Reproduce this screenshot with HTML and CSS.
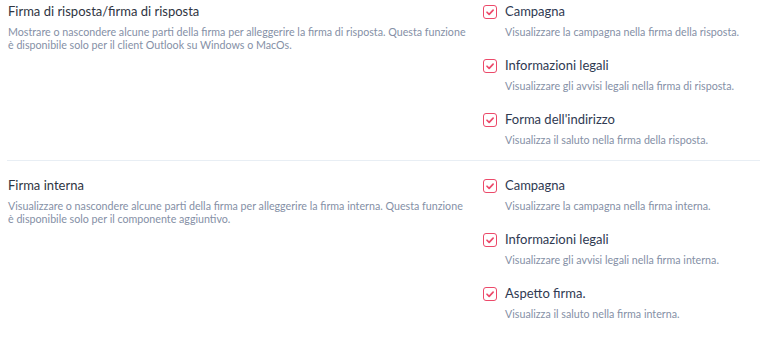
FILE: index.html
```html
<!DOCTYPE html>
<html lang="it">
<head>
    <meta charset="UTF-8">
    <title>Firma</title>
    <link rel="stylesheet" href="styles.css">
</head>
<body>
    <div class="settings">
        <div class="section">
            <div class="info">
                <h3>Firma di risposta/firma di risposta</h3>
                <p>Mostrare o nascondere alcune parti della firma per alleggerire la firma di risposta. Questa funzione è disponibile solo per il client Outlook su Windows o MacOs.</p>
            </div>
            <div class="options">
                <label class="option">
                    <span class="check"><svg viewBox="0 0 10 10"><path d="M2.5 5.2 L4.3 7 L7.6 3.4"/></svg></span>
                    <span class="text">
                        <span class="name">Campagna</span>
                        <span class="desc">Visualizzare la campagna nella firma della risposta.</span>
                    </span>
                </label>
                <label class="option">
                    <span class="check"><svg viewBox="0 0 10 10"><path d="M2.5 5.2 L4.3 7 L7.6 3.4"/></svg></span>
                    <span class="text">
                        <span class="name">Informazioni legali</span>
                        <span class="desc">Visualizzare gli avvisi legali nella firma di risposta.</span>
                    </span>
                </label>
                <label class="option">
                    <span class="check"><svg viewBox="0 0 10 10"><path d="M2.5 5.2 L4.3 7 L7.6 3.4"/></svg></span>
                    <span class="text">
                        <span class="name">Forma dell'indirizzo</span>
                        <span class="desc">Visualizza il saluto nella firma della risposta.</span>
                    </span>
                </label>
            </div>
        </div>

        <div class="section">
            <div class="info">
                <h3>Firma interna</h3>
                <p>Visualizzare o nascondere alcune parti della firma per alleggerire la firma interna. Questa funzione è disponibile solo per il componente aggiuntivo.</p>
            </div>
            <div class="options">
                <label class="option">
                    <span class="check"><svg viewBox="0 0 10 10"><path d="M2.5 5.2 L4.3 7 L7.6 3.4"/></svg></span>
                    <span class="text">
                        <span class="name">Campagna</span>
                        <span class="desc">Visualizzare la campagna nella firma interna.</span>
                    </span>
                </label>
                <label class="option">
                    <span class="check"><svg viewBox="0 0 10 10"><path d="M2.5 5.2 L4.3 7 L7.6 3.4"/></svg></span>
                    <span class="text">
                        <span class="name">Informazioni legali</span>
                        <span class="desc">Visualizzare gli avvisi legali nella firma interna.</span>
                    </span>
                </label>
                <label class="option">
                    <span class="check"><svg viewBox="0 0 10 10"><path d="M2.5 5.2 L4.3 7 L7.6 3.4"/></svg></span>
                    <span class="text">
                        <span class="name">Aspetto firma.</span>
                        <span class="desc">Visualizza il saluto nella firma interna.</span>
                    </span>
                </label>
            </div>
        </div>
    </div>
</body>
</html>
```

FILE: styles.css
```css
body {
    font-family: Lato, "Noto Sans", sans-serif;
    background-color: #fff;
    margin: 0;
    padding: 0;
}

.settings {
    padding: 0 0 0 7px;
}

.section {
    display: flex;
    padding: 4px 0 14px 1px;
    border-bottom: 1px solid #e8eef4;
}

.section + .section {
    padding-top: 17px;
    border-bottom: none;
}

.info {
    width: 462px;
    margin-right: 13px;
}

.info h3 {
    margin: 0 0 6px;
    font-size: 13px;
    font-weight: normal;
    line-height: 15px;
    color: #2f3542;
}

.info p {
    margin: 0;
    font-size: 10.7px;
    line-height: 13px;
    color: #8590a6;
}

.options {
    display: flex;
    flex-direction: column;
    gap: 20px;
}

.option {
    display: flex;
    align-items: flex-start;
}

.check {
    width: 12px;
    height: 12px;
    border: 1.5px solid #ec4a6a;
    border-radius: 3px;
    margin: 1px 8px 0 0;
    flex-shrink: 0;
}

.check svg {
    display: block;
    width: 12px;
    height: 12px;
    fill: none;
    stroke: #ec4a6a;
    stroke-width: 1.4;
    stroke-linecap: round;
    stroke-linejoin: round;
}

.text {
    display: flex;
    flex-direction: column;
}

.name {
    font-size: 13px;
    line-height: 15px;
    color: #2f3a52;
    margin-bottom: 6px;
}

.desc {
    font-size: 10.7px;
    line-height: 13px;
    color: #8590a6;
}
```
